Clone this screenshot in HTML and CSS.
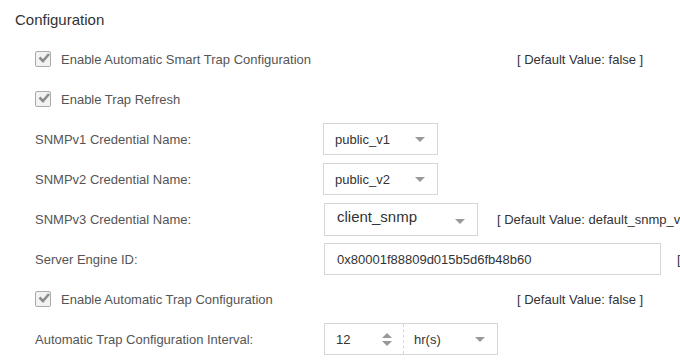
FILE: index.html
```html
<!DOCTYPE html>
<html lang="en">
  <head>
    <meta charset="UTF-8" />
    <meta name="viewport" content="width=device-width, initial-scale=1.0" />
    <title>Configuration</title>
    <link rel="stylesheet" href="styles.css">
  </head>
  <body>
    <div class="panel">
      <div class="title">Configuration</div>

      <div class="row">
        <label class="check">
          <span class="box"><svg viewBox="0 0 16 16" width="16" height="16"><path d="M3.5 7.5 L7 11 L13 4" fill="none" stroke="#8c8c8c" stroke-width="2.6"/></svg></span>
          Enable Automatic Smart Trap Configuration
        </label>
        <span class="hint">[ Default Value: false ]</span>
      </div>

      <div class="row">
        <label class="check">
          <span class="box"><svg viewBox="0 0 16 16" width="16" height="16"><path d="M3.5 7.5 L7 11 L13 4" fill="none" stroke="#8c8c8c" stroke-width="2.6"/></svg></span>
          Enable Trap Refresh
        </label>
      </div>

      <div class="row">
        <span class="label">SNMPv1 Credential Name:</span>
        <div class="select small">public_v1<span class="caret"></span></div>
      </div>

      <div class="row">
        <span class="label">SNMPv2 Credential Name:</span>
        <div class="select small">public_v2<span class="caret"></span></div>
      </div>

      <div class="row">
        <span class="label">SNMPv3 Credential Name:</span>
        <div class="select wide">client_snmp<span class="caret"></span></div>
        <span class="hint inline">[ Default Value: default_snmp_v3 ]</span>
      </div>

      <div class="row">
        <span class="label">Server Engine ID:</span>
        <div class="input engine">0x80001f88809d015b5d6fb48b60</div>
        <span class="hint inline cut">[ Default Value: ]</span>
      </div>

      <div class="row">
        <label class="check">
          <span class="box"><svg viewBox="0 0 16 16" width="16" height="16"><path d="M3.5 7.5 L7 11 L13 4" fill="none" stroke="#8c8c8c" stroke-width="2.6"/></svg></span>
          Enable Automatic Trap Configuration
        </label>
        <span class="hint">[ Default Value: false ]</span>
      </div>

      <div class="row">
        <span class="label">Automatic Trap Configuration Interval:</span>
        <div class="combo">
          <div class="num">12<span class="spin"><i class="up"></i><i class="down"></i></span></div>
          <div class="unit">hr(s)<span class="caret"></span></div>
        </div>
      </div>
    </div>
  </body>
</html>
```

FILE: styles.css
```css
body {
  margin: 0;
  font-family: "Liberation Sans", Arial, sans-serif;
  background: #fff;
  color: #555;
  overflow: hidden;
}
.panel {
  padding-left: 15px;
  width: 665px;
  overflow: hidden;
}
.title {
  height: 39px;
  line-height: 39px;
  font-size: 15px;
  color: #333;
}
.row {
  display: flex;
  align-items: center;
  height: 40px;
  padding-left: 20px;
  font-size: 13px;
  white-space: nowrap;
}
.check {
  display: flex;
  align-items: center;
  gap: 10px;
  width: 482px;
  flex-shrink: 0;
}
.box {
  display: block;
  width: 14px;
  height: 14px;
  border: 1px solid #aaa;
  border-radius: 2px;
  background: #f2f2f2;
  position: relative;
}
.box svg {
  position: absolute;
  left: 0;
  top: -2px;
}
.hint {
  color: #333;
}
.hint.inline {
  margin-left: 19px;
}
.hint.cut {
  margin-left: 16px;
}
.label {
  width: 288px;
  flex-shrink: 0;
}
.select, .input, .combo {
  box-sizing: border-box;
  height: 32px;
  border: 1px solid #d6d6d6;
  color: #333;
  display: flex;
  align-items: center;
  position: relative;
  flex-shrink: 0;
}
.select {
  padding-left: 11px;
}
.small {
  width: 115px;
}
.wide {
  width: 154px;
  height: 33px;
  margin-left: 1px;
  font-size: 15px;
  padding-left: 12px;
  padding-bottom: 6px;
}
.caret {
  position: absolute;
  right: 12px;
  top: 50%;
  margin-top: -2px;
  border-left: 5px solid transparent;
  border-right: 5px solid transparent;
  border-top: 5px solid #999;
}
.wide .caret {
  margin-top: 0;
}
.input {
  padding-left: 12px;
}
.engine {
  width: 337px;
  margin-left: 1px;
}
.combo {
  width: 174px;
  margin-left: 1px;
}
.num {
  width: 79px;
  height: 100%;
  box-sizing: border-box;
  padding-left: 11px;
  display: flex;
  align-items: center;
  border-right: 1px dashed #d6d6d6;
  position: relative;
}
.spin {
  position: absolute;
  left: 57px;
  top: 50%;
  margin-top: -6px;
  display: flex;
  flex-direction: column;
  gap: 3px;
}
.spin i {
  display: block;
  border-left: 5px solid transparent;
  border-right: 5px solid transparent;
}
.spin .up {
  border-bottom: 5px solid #999;
}
.spin .down {
  border-top: 5px solid #999;
}
.unit {
  flex: 1;
  height: 100%;
  display: flex;
  align-items: center;
  padding-left: 10px;
  position: relative;
}
```
